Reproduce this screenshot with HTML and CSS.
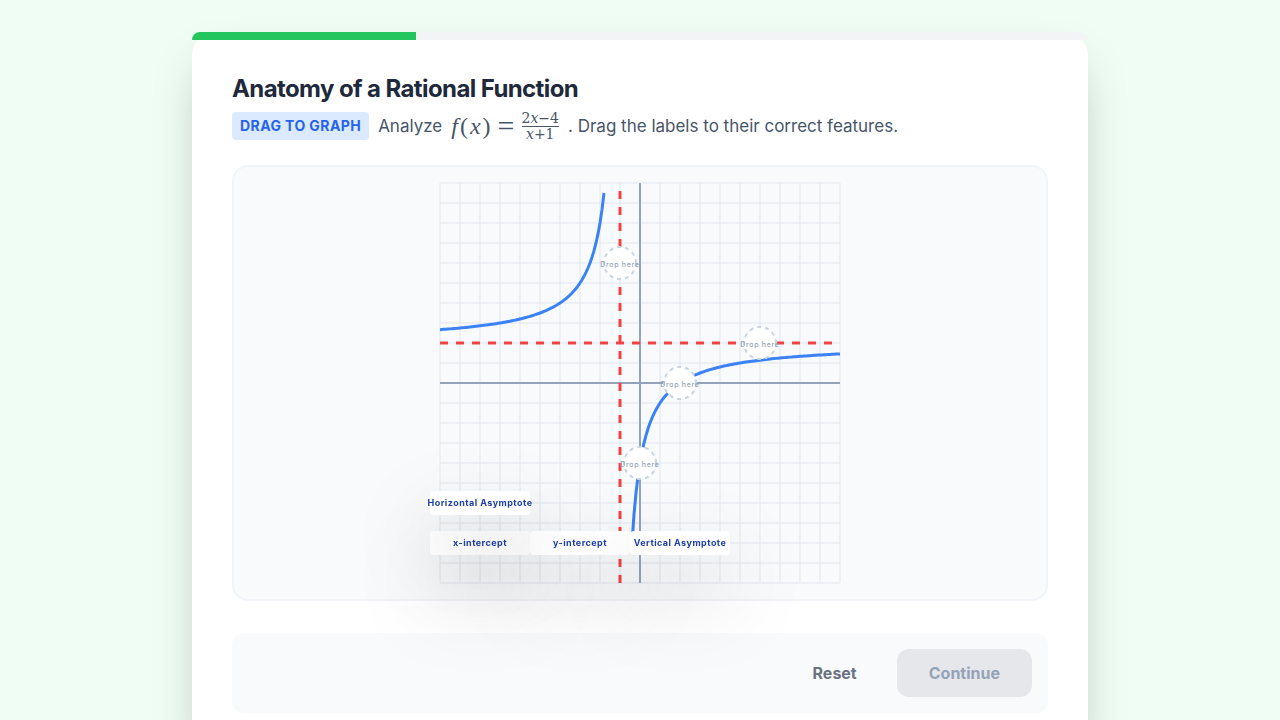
FILE: index.html
```html
<!DOCTYPE html>
<html lang="en">
<head>
  <meta charset="UTF-8">
  <meta name="viewport" content="width=device-width, initial-scale=1">
  <title>Anatomy of a Rational Function</title>
  <link rel="stylesheet" href="styles.css">
</head>
<body>
  <main class="card">
    <div class="progress"><div class="progress-fill" style="width: 25%;"></div></div>
    <h1>Anatomy of a Rational Function</h1>
    <p class="prompt">
      <span class="badge">Drag to Graph</span>
      <span>Analyze</span>
      <span class="math">
        <span class="call"><i>f</i><span>(</span><i>x</i><span>)</span></span>
        <span class="equals">=</span>
        <span class="fraction">
          <span>2<i>x</i>−4</span>
          <span class="denominator"><i>x</i>+1</span>
        </span>
      </span>
      <span>. Drag the labels to their correct features.</span>
    </p>

    <div class="graph">
      <div class="board">
        <svg viewBox="0 0 400 400" role="img" aria-label="Graph of f(x)">
          <g id="grid" class="grid"></g>
          <path class="axis" d="M0 200H400M200 0V400"/>
          <path class="asymptote" d="M180 400V0"/>
          <path class="asymptote" d="M0 160H400"/>
          <path id="left" class="curve"/>
          <path id="right" class="curve"/>
          <g class="zone"><circle cx="180" cy="80" r="16"/><text x="180" y="84">Drop here</text></g>
          <g class="zone"><circle cx="320" cy="160" r="16"/><text x="320" y="164">Drop here</text></g>
          <g class="zone"><circle cx="240" cy="200" r="16"/><text x="240" y="204">Drop here</text></g>
          <g class="zone"><circle cx="200" cy="280" r="16"/><text x="200" y="284">Drop here</text></g>
        </svg>
        <button class="label label-x">x-intercept</button>
        <button class="label label-y">y-intercept</button>
        <button class="label label-va">Vertical Asymptote</button>
        <button class="label label-ha">Horizontal Asymptote</button>
      </div>
    </div>

    <div class="actions">
      <button class="reset">Reset</button>
      <button class="continue" disabled>Continue</button>
    </div>
  </main>
  <script>
    // 20px per unit, origin in the middle of the board
    const unit = 20;
    const origin = 200;

    let lines = '';
    for (let p = 0; p <= 400; p += unit) {
      lines += `<path d="M${p} 0V400M0 ${p}H400"/>`;
    }
    document.getElementById('grid').innerHTML = lines;

    function plot(id, from, to) {
      const points = [];
      const steps = Math.round((to - from) / 0.1);
      for (let i = 0; i <= steps; i++) {
        const x = from + i * 0.1;
        const y = (2 * x - 4) / (x + 1);
        points.push((origin + x * unit).toFixed(2) + ' ' + (origin - y * unit).toFixed(2));
      }
      document.getElementById(id).setAttribute('d', 'M' + points.join('L'));
    }
    plot('left', -10, -1.8);
    plot('right', -0.4, 10);
  </script>
</body>
</html>
```
FILE: styles.css
```css
* {
  box-sizing: border-box;
}
body {
  margin: 0;
  padding: 32px;
  background-color: #f0fdf4;
  color: #1e293b;
  font-family: Inter, sans-serif;
}
button {
  border: none;
  font-family: inherit;
  font-weight: 700;
  cursor: pointer;
}
.card {
  position: relative;
  max-width: 896px;
  margin: 0 auto;
  padding: 40px;
  background-color: #fff;
  border-radius: 24px;
  box-shadow: 0 25px 50px -12px rgba(0, 0, 0, 0.25);
}
.progress {
  position: absolute;
  top: 0;
  left: 0;
  right: 0;
  height: 8px;
  overflow: hidden;
  border-radius: 8px 8px 0 0;
  background-color: #f3f4f6;
}
.progress-fill {
  height: 100%;
  background-color: #22c55e;
}
h1 {
  margin: 0 0 7px;
  padding-top: 1px;
  font-size: 24px;
  line-height: 32px;
  letter-spacing: -0.025em;
}
.prompt {
  display: flex;
  align-items: center;
  gap: 9px;
  margin: 0 0 25px;
  color: #475569;
  font-size: 17px;
  line-height: 28px;
}
.badge {
  padding: 0 8px;
  border-radius: 4px;
  background-color: #dbeafe;
  color: #2563eb;
  font-size: 14px;
  font-weight: 700;
  letter-spacing: 0.03em;
  text-transform: uppercase;
}
.math {
  display: flex;
  align-items: center;
  gap: 7px;
  height: 28px;
  font-family: "Liberation Serif", serif;
  font-size: 24px;
}
.call {
  display: flex;
  gap: 2px;
}
.equals {
  font-size: 30px;
}
.fraction {
  display: flex;
  flex-direction: column;
  font-family: "DejaVu Serif", serif;
  font-size: 14px;
  line-height: 15px;
  text-align: center;
}
.denominator {
  border-top: 1px solid #475569;
}
.graph {
  display: flex;
  justify-content: center;
  margin-bottom: 32px;
  padding: 16px;
  border: 2px solid #f1f5f9;
  border-radius: 16px;
  background-color: #f8fafc;
}
.board {
  position: relative;
  width: 400px;
}
.board svg {
  display: block;
  width: 100%;
  overflow: visible;
}
.grid {
  stroke: #e2e8f0;
}
.axis {
  stroke: #94a3b8;
  stroke-width: 2;
}
.asymptote {
  stroke: #ef4444;
  stroke-width: 3;
  stroke-dasharray: 8 8;
}
.curve {
  fill: none;
  stroke: #3b82f6;
  stroke-width: 3;
}
.zone circle {
  fill: #fff;
  stroke: #cbd5e1;
  stroke-width: 2;
  stroke-dasharray: 4 4;
}
.zone text {
  fill: #94a3b8;
  font-size: 7px;
  font-weight: 500;
  letter-spacing: 0.1em;
  text-anchor: middle;
}
/* draggable labels, placed in board coordinates */
.label {
  position: absolute;
  display: flex;
  justify-content: center;
  align-items: center;
  width: 100px;
  height: 24px;
  padding: 0 0 2px;
  border-radius: 4px;
  background-color: #fff;
  color: #1e40af;
  font-size: 9px;
  letter-spacing: 0.05em;
  white-space: nowrap;
  filter: drop-shadow(0 36px 40px rgba(0, 0, 0, 0.2));
}
.label-x {
  left: -10px;
  top: 348px;
}
.label-y {
  left: 90px;
  top: 348px;
}
.label-va {
  left: 190px;
  top: 348px;
}
.label-ha {
  left: -10px;
  top: 308px;
}
.actions {
  display: flex;
  justify-content: flex-end;
  gap: 8px;
  padding: 16px;
  border-radius: 12px;
  background-color: #f8fafc;
}
.actions button {
  padding: 12px 32px;
  border-radius: 12px;
  font-size: 16px;
  line-height: 24px;
}
.reset {
  background: none;
  color: #6b7280;
}
.continue {
  background-color: #e5e7eb;
  color: #94a3b8;
  cursor: not-allowed;
}
```
